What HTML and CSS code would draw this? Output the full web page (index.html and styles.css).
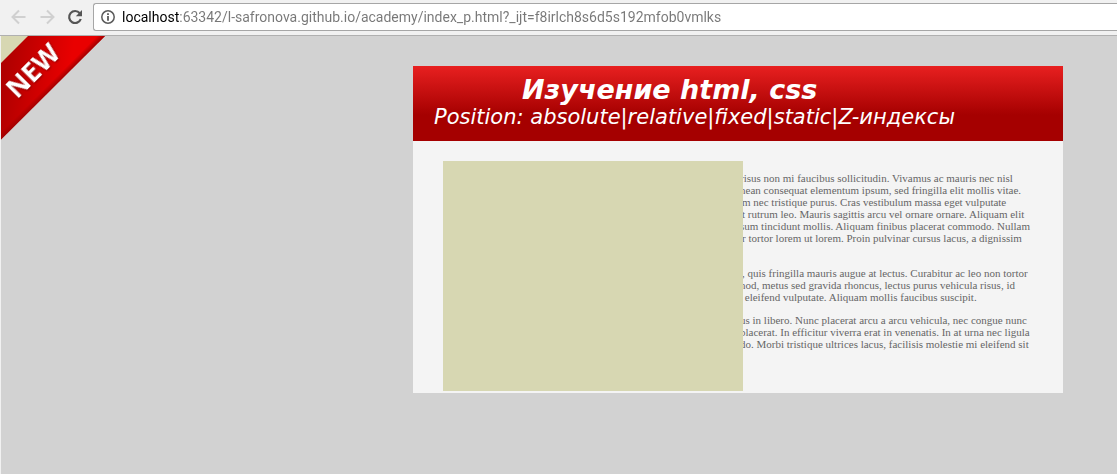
FILE: index.html
```
<!DOCTYPE html>
<html lang="ru">
<head>
<meta charset="utf-8">
<title>Изучение html, css</title>
<link rel="stylesheet" href="styles.css">
</head>
<body>
<div class="toolbar">
  <button class="tool" type="button" aria-label="Back" disabled>
    <svg width="16" height="16" viewBox="0 0 16 16"><path d="M14.500 8H2M8 1.500L1.500 8L8 14.500" fill="none" stroke="currentColor" stroke-width="2"/></svg>
  </button>
  <button class="tool" type="button" aria-label="Forward" disabled>
    <svg width="16" height="16" viewBox="0 0 16 16"><path d="M1.500 8H14M8 1.500L14.500 8L8 14.500" fill="none" stroke="currentColor" stroke-width="2"/></svg>
  </button>
  <button class="tool" type="button" aria-label="Reload">
    <svg width="16" height="16" viewBox="0 0 16 16"><path d="M12.800 4.200A6 6 0 1 0 13.800 10" fill="none" stroke="currentColor" stroke-width="2.200"/><path d="M15 1V7.200H8.800Z" fill="currentColor"/></svg>
  </button>
  <div class="address">
    <svg width="16" height="16" viewBox="0 0 16 16"><circle cx="8" cy="8" r="6.200" fill="none" stroke="#5a5a5a" stroke-width="1.500"/><path d="M7.100 4.300h1.800v1.700H7.100zM7.100 7h1.800v4.800H7.100z" fill="#5a5a5a"/></svg>
    <input class="url" type="text" aria-label="Address" value="localhost:63342/l-safronova.github.io/academy/index_p.html?_ijt=f8irlch8s6d5s192mfob0vmlks">
  </div>
</div>
<div class="page">
  <div class="corner">
    <svg class="ribbon" width="104" height="104" viewBox="0 0 104 104" role="img" aria-label="NEW">
      <defs>
        <linearGradient id="red" gradientUnits="userSpaceOnUse" x1="4" y1="30" x2="68" y2="40">
          <stop offset="0" stop-color="#b00000"/><stop offset="1" stop-color="#e90000"/>
        </linearGradient>
        <linearGradient id="edge" gradientUnits="userSpaceOnUse" x1="48" y1="48" x2="52" y2="52">
          <stop offset="0" stop-color="#a00000" stop-opacity="0"/><stop offset="1" stop-color="#a00000"/>
        </linearGradient>
      </defs>
      <path d="M27 0H104L0 103.500V27Z" fill="url(#red)"/>
      <path d="M96 0H104L0 103.500V96Z" fill="url(#edge)"/>
      <text class="ribbon-text" transform="translate(32 35) rotate(-45)" x="0" y="9" text-anchor="middle">NEW</text>
    </svg>
  </div>
  <main class="card">
    <header class="banner">
      <h1>Изучение html, css</h1>
      <p>Position: absolute|relative|fixed|static|Z-индексы</p>
    </header>
    <div class="content">
      <div class="cover"></div>
      <p>
        <span class="tucked">risus non mi faucibus sollicitudin. Vivamus ac mauris nec nisl</span>
        <span class="tucked">nean consequat elementum ipsum, sed fringilla elit mollis vitae.</span>
        <span>m nec tristique purus. Cras vestibulum massa eget vulputate</span>
        <span>t rutrum leo. Mauris sagittis arcu vel ornare ornare. Aliquam elit</span>
        <span class="tucked">sum tincidunt mollis. Aliquam finibus placerat commodo. Nullam</span>
        <span>r tortor lorem ut lorem. Proin pulvinar cursus lacus, a dignissim</span>
        <span>&nbsp;</span>
      </p>
      <p>
        <span>, quis fringilla mauris augue at lectus. Curabitur ac leo non tortor</span>
        <span class="tucked">nod, metus sed gravida rhoncus, lectus purus vehicula risus, id</span>
        <span>&nbsp;eleifend vulputate. Aliquam mollis faucibus suscipit.</span>
      </p>
      <p>
        <span class="tucked">us in libero. Nunc placerat arcu a arcu vehicula, nec congue nunc</span>
        <span class="tucked">placerat. In efficitur viverra erat in venenatis. In at urna nec ligula</span>
        <span class="tucked">do. Morbi tristique ultrices lacus, facilisis molestie mi eleifend sit</span>
        <span>&nbsp;</span>
      </p>
    </div>
  </main>
</div>
</body>
</html>
```
FILE: styles.css
```
* { box-sizing: border-box; }
body {
  margin: 0;
  min-height: 100vh;
  display: flex;
  flex-direction: column;
  background: #f1f1f1;
  font-family: "Liberation Serif", serif;
}
.toolbar {
  display: flex;
  align-items: center;
  gap: 12px;
  height: 36px;
  padding: 0 0 2px 11px;
  border-bottom: 1px solid #b0b0b0;
}
.tool {
  display: flex;
  padding: 0;
  border: 0;
  background: none;
  color: #555;
}
.tool:disabled { color: #d0d0d0; }
.address {
  flex: 1;
  display: flex;
  align-items: center;
  gap: 6px;
  height: 28px;
  margin-left: -2px;
  padding-left: 6px;
  border: 1px solid #a6a6a6;
  border-right: 0;
  border-radius: 3px 0 0 3px;
  background: #fff;
}
.url {
  flex: 1;
  min-width: 0;
  padding: 0;
  border: 0;
  outline: 0;
  font: 14px Roboto, sans-serif;
  color: transparent;
  background: linear-gradient(to right, #000 57px, #777 57px);
  background-clip: text;
  -webkit-background-clip: text;
}
.page {
  position: relative;
  flex: 1;
  display: flex;
  justify-content: flex-end;
  align-items: flex-start;
  margin-left: 1px;
  padding: 30px 54px 30px 0;
  background: #d2d2d2;
}
.corner {
  position: absolute;
  top: 0;
  left: 0;
}
.ribbon {
  display: block;
  background: linear-gradient(135deg, #d7d7b2 25%, transparent 25%);
}
.ribbon-text {
  font: bold 27px "Noto Sans", sans-serif;
  fill: #fff;
  filter: drop-shadow(0 1px 1px #800000);
}
.card {
  width: 650px;
  background: #f4f4f4;
}
.banner {
  padding: 8px 21px 12px;
  color: #fff;
  background: linear-gradient(#e82020, #a50000 65%);
  font-family: "DejaVu Sans", sans-serif;
  font-style: italic;
}
.banner h1 {
  margin: 0;
  padding-left: 88px;
  font-size: 27px;
  line-height: 31px;
}
.banner p {
  margin: 0;
  font-size: 21px;
  line-height: 24px;
}
.content {
  position: relative;
  padding: 31px 0 31px 329px;
  color: #666;
  font-size: 11px;
  line-height: 12px;
}
.content p { margin: 0 0 11px; }
.content p:last-child { margin: 0; }
.content span { display: block; white-space: nowrap; }
.content .tucked { margin-left: -2px; }
.cover {
  position: absolute;
  top: 20px;
  left: 30px;
  width: 300px;
  height: 230px;
  background: #d7d7b2;
}
```
